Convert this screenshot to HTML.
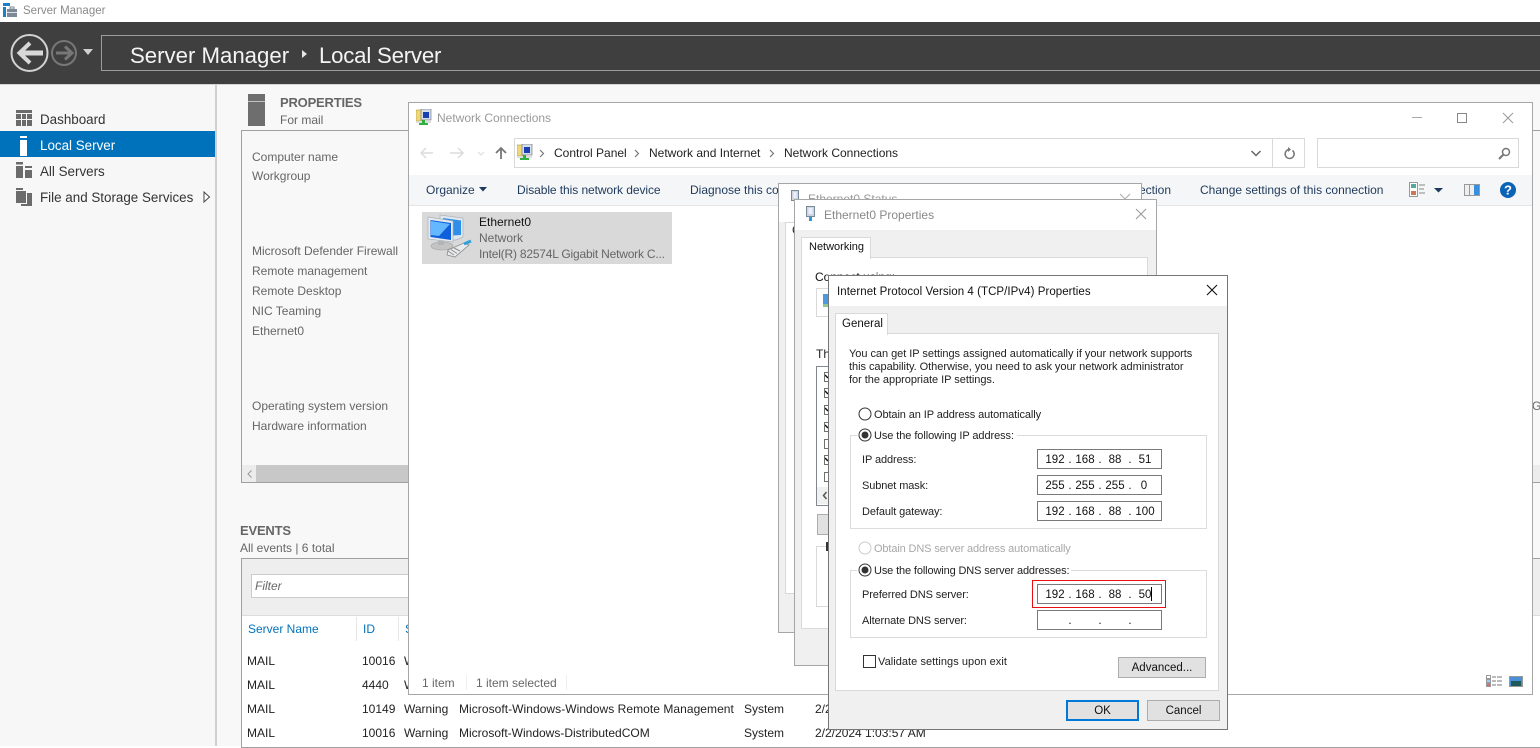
<!DOCTYPE html>
<html><head><meta charset="utf-8"><style>
html,body{margin:0;padding:0}
body{position:relative;width:1540px;height:746px;overflow:hidden;background:#fff;font-family:"Liberation Sans",sans-serif;font-size:12px;color:#000}
div,svg{position:absolute;box-sizing:border-box}
.t{white-space:nowrap;line-height:14px;height:14px}
.g{color:#666}
.k{color:#222}
.n{color:#1e395b}
.s{font-size:13.4px;line-height:16px;height:16px;color:#333;white-space:nowrap}
.b{font-weight:bold;font-size:13px;line-height:16px;height:16px;color:#666;white-space:nowrap;letter-spacing:-.2px}
.h{white-space:nowrap;height:28px;line-height:28px;font-size:22.2px;color:#f4f4f4}
.l{font-size:11px;letter-spacing:-.1px}
.win{background:#fff;border:1px solid #a6a6a6}
.inp{background:#fff;border:1px solid #7a7a7a;width:125px;height:20px}
.ip{white-space:nowrap;line-height:14px;height:14px;text-align:center;width:26px;font-size:11.5px;color:#111}
.btn{background:#e1e1e1;border:1px solid #adadad;text-align:center;line-height:20px;color:#111;font-size:11.5px}
.grp{border:1px solid #dcdcdc}
.cb{width:7px;height:10px;background:#fff;border:1px solid #707070;border-right:0}
</style></head><body>

<!-- title bar -->
<svg style="left:2px;top:2px" width="16" height="16" viewBox="0 0 16 16"><rect x="1" y="1" width="7" height="3" fill="#1a80c8"/><rect x="1" y="5" width="3" height="10" fill="#1a80c8"/><rect x="5" y="7" width="10" height="8" fill="#7c8a96"/><rect x="5" y="10" width="10" height="1" fill="#dde"/><rect x="8" y="5" width="4" height="2" fill="none" stroke="#7c8a96"/></svg>
<div class="t" style="left:23px;top:4px;color:#8a8a8a;font-size:11.5px">Server Manager</div>

<!-- header -->
<div style="left:0;top:22px;width:1540px;height:62px;background:#3f3f3f"></div>
<div style="left:0;top:84px;width:1540px;height:1px;background:#d4d4d4"></div>
<svg style="left:8px;top:30px" width="90" height="46" viewBox="0 0 90 46">
<circle cx="21.5" cy="23" r="18" fill="none" stroke="#d2d2d2" stroke-width="2"/>
<path d="M12 23H35" stroke="#d8d8d8" stroke-width="5" fill="none"/>
<path d="M22 13L11.500 23L22 33" stroke="#d8d8d8" stroke-width="4" fill="none"/>
<circle cx="56" cy="23" r="12" fill="none" stroke="#777" stroke-width="2"/>
<path d="M48 23H63M57 16.500L64 23L57 29.500" stroke="#777" stroke-width="3" fill="none"/>
<path d="M75 19H85L80 25Z" fill="#d0d0d0"/>
</svg>
<div style="left:101px;top:35px;width:1445px;height:36px;border:1px solid #9c9c9c"></div>
<div class="h" style="left:130px;top:42px">Server Manager</div>
<svg style="left:301px;top:49px" width="7" height="10"><path d="M1 1L6 5L1 9Z" fill="#e6e6e6"/></svg>
<div class="h" style="left:319px;top:42px;letter-spacing:-.2px">Local Server</div>

<!-- sidebar and main bg -->
<div style="left:0;top:85px;width:215px;height:661px;background:#f7f7f7"></div>
<div style="left:215px;top:85px;width:2px;height:661px;background:#cfcfcf"></div>
<div style="left:217px;top:85px;width:1323px;height:661px;background:#f8f8f8"></div>
<div style="left:0;top:131px;width:215px;height:26px;background:#0072bc"></div>
<svg style="left:16px;top:110px" width="16" height="100" viewBox="0 0 16 100">
<path d="M0 0H16V3H0ZM0 4H5V9H0ZM6 4H10V9H6ZM11 4H16V9H11ZM0 10H5V16H0ZM6 10H10V16H6ZM11 10H16V16H11Z" fill="#6b6b6b"/>
<path d="M4 26H11V28H4ZM4 30H11V46H4Z" fill="#fff"/>
<path d="M0 52H7V54.500H0ZM0 56H7V68H0ZM9 56H16V58H9ZM9 60H16V68H9Z" fill="#6b6b6b"/>
<path d="M0 78H7V80H0ZM0 81H10V93H0ZM11 83H16V96H5V94H11Z" fill="#6b6b6b"/>
</svg>
<div class="s" style="left:40px;top:112px">Dashboard</div>
<div class="s" style="left:40px;top:138px;color:#fff">Local Server</div>
<div class="s" style="left:40px;top:164px">All Servers</div>
<div class="s" style="left:40px;top:190px">File and Storage Services</div>
<svg style="left:203px;top:191px" width="8" height="12"><path d="M1 1L6.500 6L1 11Z" fill="#fff" stroke="#444"/></svg>

<!-- properties -->
<svg style="left:248px;top:94px" width="17" height="32"><rect width="17" height="32" fill="#6e6e6e"/><rect y="7" width="17" height="1" fill="#c0c0c0"/></svg>
<div class="b" style="left:280px;top:95px">PROPERTIES</div>
<div class="t g" style="left:280px;top:113px">For mail</div>
<div style="left:241px;top:130px;width:1300px;height:353px;border:1px solid #a0a0a0;background:#f8f8f8"></div>
<div style="left:242px;top:465px;width:1298px;height:17px;background:#ececec"></div>
<div style="left:256px;top:465px;width:160px;height:17px;background:#c8c8c8"></div>
<svg style="left:247px;top:470px" width="6" height="8"><path d="M4.500 0.500L1 4L4.500 7.500" fill="none" stroke="#999"/></svg>
<div class="t g" style="left:252px;top:150px">Computer name</div>
<div class="t g" style="left:252px;top:169px">Workgroup</div>
<div class="t g" style="left:252px;top:244px">Microsoft Defender Firewall</div>
<div class="t g" style="left:252px;top:264px">Remote management</div>
<div class="t g" style="left:252px;top:284px">Remote Desktop</div>
<div class="t g" style="left:252px;top:304px">NIC Teaming</div>
<div class="t g" style="left:252px;top:324px">Ethernet0</div>
<div class="t g" style="left:252px;top:399px">Operating system version</div>
<div class="t g" style="left:252px;top:419px">Hardware information</div>
<div class="t g" style="left:1532px;top:399px">G</div>

<!-- events -->
<div class="b" style="left:240px;top:523px">EVENTS</div>
<div class="t g" style="left:240px;top:541px">All events | 6 total</div>
<div style="left:241px;top:558px;width:1300px;height:190px;border:1px solid #a0a0a0;background:#fff"></div>
<div style="left:242px;top:559px;width:1298px;height:57px;background:#eeeeee;border-bottom:1px solid #dcdcdc"></div>
<div style="left:251px;top:574px;width:165px;height:24px;background:#fff;border:1px solid #ccc"></div>
<div class="t g" style="left:255px;top:579px;font-style:italic">Filter</div>
<div class="t" style="left:248px;top:622px;color:#0072bc">Server Name</div>
<div class="t" style="left:363px;top:622px;color:#0072bc">ID</div>
<div class="t" style="left:405px;top:622px;color:#0072bc">S</div>
<div style="left:356px;top:617px;width:1px;height:24px;background:#e6e6e6"></div>
<div style="left:398px;top:617px;width:1px;height:24px;background:#e6e6e6"></div>
<div class="t k" style="left:247px;top:654px">MAIL</div><div class="t k" style="left:362px;top:654px">10016</div><div class="t k" style="left:404px;top:654px">W</div>
<div class="t k" style="left:247px;top:678px">MAIL</div><div class="t k" style="left:362px;top:678px">4440</div><div class="t k" style="left:404px;top:678px">W</div>
<div class="t k" style="left:247px;top:702px">MAIL</div><div class="t k" style="left:362px;top:702px">10149</div><div class="t k" style="left:404px;top:702px">Warning</div><div class="t k" style="left:459px;top:702px;letter-spacing:.05px">Microsoft-Windows-Windows Remote Management</div><div class="t k" style="left:744px;top:702px">System</div><div class="t k" style="left:815px;top:702px">2/2/2024 1:03:57 AM</div>
<div class="t k" style="left:247px;top:726px">MAIL</div><div class="t k" style="left:362px;top:726px">10016</div><div class="t k" style="left:404px;top:726px">Warning</div><div class="t k" style="left:459px;top:726px">Microsoft-Windows-DistributedCOM</div><div class="t k" style="left:744px;top:726px">System</div><div class="t k" style="left:815px;top:726px">2/2/2024 1:03:57 AM</div>

<!-- Network Connections -->
<div class="win" style="left:408px;top:102px;width:1125px;height:593px"></div>
<svg style="left:416px;top:109px" width="16" height="17" viewBox="0 0 16 17"><rect x="0" y="1" width="8" height="11" fill="#f0d878" stroke="#b09a40" stroke-width=".6"/><rect x="5" y="0" width="10" height="11" fill="#d6dfe8" stroke="#667" stroke-width=".6"/><rect x="7" y="3" width="6" height="6" fill="#1a3fb0"/><rect x="0" y="12" width="15" height="2" fill="#ddd"/><rect x="6" y="11" width="3" height="3" fill="#30b040"/><rect x="3" y="14" width="9" height="2" fill="#30b040"/></svg>
<div class="t" style="left:437px;top:111px;color:#999">Network Connections</div>
<svg style="left:1405px;top:110px" width="115" height="14"><path d="M7 7.500H17" stroke="#aaa"/><rect x="52.500" y="3.500" width="9" height="9" fill="none" stroke="#888"/><path d="M98 3L108 13M108 3L98 13" stroke="#999" fill="none"/></svg>
<svg style="left:420px;top:145px" width="90" height="16"><path d="M1 8H13M6 3L1 8L6 13" fill="none" stroke="#dcdcdc" stroke-width="1.500"/><path d="M30 8H43M38 3L43 8L38 13" fill="none" stroke="#dcdcdc" stroke-width="1.500"/><path d="M58 7L61 10L64 7" fill="none" stroke="#ddd"/><path d="M81 14V3M76 8L81 3L86 8" fill="none" stroke="#777" stroke-width="1.800"/></svg>
<div style="left:514px;top:138px;width:759px;height:30px;border:1px solid #d9d9d9;background:#fff"></div>
<div style="left:1272px;top:138px;width:33px;height:30px;border:1px solid #d9d9d9;background:#fff"></div>
<svg style="left:517px;top:144px" width="16" height="17" viewBox="0 0 16 17"><rect x="0" y="1" width="8" height="11" fill="#f0d878" stroke="#b09a40" stroke-width=".6"/><rect x="5" y="0" width="10" height="11" fill="#d6dfe8" stroke="#667" stroke-width=".6"/><rect x="7" y="3" width="6" height="6" fill="#1a3fb0"/><rect x="0" y="12" width="15" height="2" fill="#ddd"/><rect x="6" y="11" width="3" height="3" fill="#30b040"/><rect x="3" y="14" width="9" height="2" fill="#30b040"/></svg>
<svg style="left:538px;top:149px" width="8" height="9"><path d="M2 1L5.500 4.500L2 8" fill="none" stroke="#777" stroke-width="1.200"/></svg>
<div class="t k" style="left:554px;top:146px">Control Panel</div>
<svg style="left:633px;top:149px" width="8" height="9"><path d="M2 1L5.500 4.500L2 8" fill="none" stroke="#777" stroke-width="1.200"/></svg>
<div class="t k" style="left:649px;top:146px">Network and Internet</div>
<svg style="left:768px;top:149px" width="8" height="9"><path d="M2 1L5.500 4.500L2 8" fill="none" stroke="#777" stroke-width="1.200"/></svg>
<div class="t k" style="left:784px;top:146px">Network Connections</div>
<svg style="left:1250px;top:149px" width="12" height="9"><path d="M1.500 2L6 6.500L10.500 2" fill="none" stroke="#666" stroke-width="1.500"/></svg>
<svg style="left:1282px;top:146px" width="14" height="15"><path d="M10.500 4.500A4.500 4.500 0 1 1 7 3.500" fill="none" stroke="#777" stroke-width="1.500"/><path d="M6 1V6L9 3.500Z" fill="#777"/></svg>
<div style="left:1317px;top:138px;width:202px;height:30px;border:1px solid #d9d9d9;background:#fff"></div>
<svg style="left:1498px;top:147px" width="13" height="13"><circle cx="8" cy="5" r="3.500" fill="none" stroke="#777" stroke-width="1.500"/><path d="M5.500 7.500L1 12" stroke="#777" stroke-width="2"/></svg>
<div style="left:409px;top:175px;width:1123px;height:31px;background:#f5f6f7;border-bottom:1px solid #e5e5e5"></div>
<div class="t n" style="left:426px;top:183px">Organize</div>
<svg style="left:479px;top:187px" width="9" height="6"><path d="M0 0H8L4 4.500Z" fill="#1e395b"/></svg>
<div class="t n" style="left:517px;top:183px;letter-spacing:-.07px">Disable this network device</div>
<div class="t n" style="left:690px;top:183px">Diagnose this connection</div>
<div class="t n" style="left:1139px;top:183px">ection</div>
<div class="t n" style="left:1200px;top:183px">Change settings of this connection</div>
<svg style="left:1409px;top:182px" width="110" height="17" viewBox="0 0 110 17">
<rect x=".5" y=".5" width="8" height="14" fill="#fff" stroke="#999"/><rect x="2" y="2" width="5" height="4" fill="#5a9"/><rect x="2" y="9" width="5" height="4" fill="#c75"/><path d="M10 3H16M10 7H15M10 11H16" stroke="#888"/>
<path d="M25 6H34L29.500 10.500Z" fill="#1e395b"/>
<rect x="55.500" y="2.500" width="15" height="11" fill="#eee" stroke="#999"/><rect x="65" y="3" width="5" height="10" fill="#3a8fdc"/><path d="M60.500 3V13" stroke="#999"/>
<circle cx="99" cy="8" r="8" fill="#0b63b5"/>
<text x="99" y="12.500" text-anchor="middle" font-family="Liberation Sans" font-weight="bold" font-size="13" fill="#fff">?</text></svg>
<div style="left:422px;top:212px;width:250px;height:52px;background:#d9d9d9"></div>
<svg style="left:426px;top:214px" width="48" height="48" viewBox="0 0 48 48">
<path d="M14 1L37 4V23L30 26H14Z" fill="#dfe6ec" stroke="#aab4bc" stroke-width=".7"/>
<path d="M17 4L35 6.500V21L17 22Z" fill="#2f8fe8"/>
<path d="M2 3L27 7V28L2 25Z" fill="#e6ebef" stroke="#a8b2ba" stroke-width=".7"/>
<path d="M4.500 6L25 9V26L4.500 23Z" fill="#0f5fdc"/>
<path d="M5 7L24 10L13 22L5 21Z" fill="#63b8ff"/>
<ellipse cx="16" cy="32" rx="11" ry="4" fill="#c4c4c4" stroke="#a5a5a5" stroke-width=".6"/>
<rect x="12" y="27" width="6" height="4" fill="#b4b4b4"/>
<path d="M22 36L38 29L43 31L29 43L21 41Z" fill="#e9ebed" stroke="#8a8a8a" stroke-width=".8"/>
<path d="M22 37L28 41M25 35.500L31 39.500M28 34L34 37" stroke="#8f8f8f" fill="none"/>
<path d="M38 30L45 27" stroke="#30a0d8" stroke-width="3"/></svg>
<div class="t" style="left:479px;top:215px;color:#111">Ethernet0</div>
<div class="t g" style="left:479px;top:231px">Network</div>
<div class="t g" style="left:479px;top:247px;letter-spacing:-.2px">Intel(R) 82574L Gigabit Network C...</div>
<div class="t g" style="left:422px;top:676px">1 item</div>
<div style="left:466px;top:675px;width:1px;height:15px;background:#eee"></div>
<div class="t g" style="left:476px;top:676px">1 item selected</div>
<div style="left:566px;top:675px;width:1px;height:15px;background:#eee"></div>
<svg style="left:1486px;top:675px" width="38" height="13"><rect x=".5" y=".5" width="4" height="3" fill="#fff" stroke="#999"/><rect x=".5" y="4.500" width="4" height="3" fill="#9cf" stroke="#999"/><rect x=".5" y="8.500" width="4" height="3" fill="#d66" stroke="#999"/><path d="M6 2H10M11 2H16M6 6H10M11 6H16M6 10H10M11 10H16" stroke="#777"/><rect x="23.500" y="1.500" width="13" height="10" fill="#4a90d8" stroke="#999"/><rect x="25" y="6" width="10" height="5" fill="#1f5a5a"/></svg>

<!-- Ethernet0 Status -->
<div class="win" style="left:778px;top:183px;width:364px;height:450px;background:#f0f0f0"></div>
<div style="left:779px;top:184px;width:362px;height:38px;background:#fff"></div>
<svg style="left:791px;top:190px" width="9" height="14"><rect x=".5" y=".5" width="7" height="10" fill="#cdd5dd" stroke="#7a8a9a"/><rect x="2.500" y="2" width="3" height="6" fill="#eef"/></svg>
<div class="t" style="left:808px;top:192px;color:#999">Ethernet0 Status</div>
<svg style="left:1119px;top:193px" width="12" height="12"><path d="M1 1L11 11M11 1L1 11" stroke="#aaa" fill="none"/></svg>
<div style="left:785px;top:222px;width:20px;height:372px;background:#fff;border:1px solid #d9d9d9"></div>
<div class="t" style="left:792px;top:223px;color:#222">C</div>

<!-- Ethernet0 Properties -->
<div class="win" style="left:794px;top:199px;width:363px;height:467px;background:#f0f0f0"></div>
<div style="left:795px;top:200px;width:361px;height:30px;background:#fff"></div>
<svg style="left:806px;top:206px" width="10" height="16"><rect x=".5" y=".5" width="8" height="10" fill="#cdd5dd" stroke="#7a8a9a"/><rect x="2.500" y="2" width="4" height="6" fill="#eef"/><rect x="3" y="11" width="3" height="4" fill="#2a9adf"/></svg>
<div class="t" style="left:824px;top:208px;color:#888">Ethernet0 Properties</div>
<svg style="left:1135px;top:208px" width="12" height="12"><path d="M1 1L11 11M11 1L1 11" stroke="#999" fill="none"/></svg>
<div style="left:801px;top:257px;width:347px;height:372px;background:#fff;border:1px solid #d9d9d9"></div>
<div style="left:801px;top:237px;width:70px;height:22px;background:#fff;border:1px solid #d9d9d9;border-bottom:0"></div>
<div class="t" style="left:809px;top:240px;font-size:11px;color:#111">Networking</div>
<div class="t" style="left:815px;top:270px;color:#111">Connect using:</div>
<div style="left:816px;top:288px;width:20px;height:29px;border:1px solid #d9d9d9;background:#fff"></div>
<svg style="left:823px;top:294px" width="7" height="14"><rect width="7" height="10" fill="#4a9ade"/><rect y="10" width="7" height="3" fill="#8fc88f"/></svg>
<div class="t" style="left:816px;top:347px;color:#222">Th</div>
<div style="left:816px;top:366px;width:20px;height:140px;border:1px solid #828790;background:#fff"></div>
<div class="cb" style="left:824px;top:372px"></div>
<div class="cb" style="left:824px;top:388px"></div>
<div class="cb" style="left:824px;top:405px"></div>
<div class="cb" style="left:824px;top:422px"></div>
<div class="cb" style="left:824px;top:439px"></div>
<div class="cb" style="left:824px;top:455px"></div>
<div class="cb" style="left:824px;top:472px"></div>
<svg style="left:825px;top:372px" width="4" height="100"><path d="M0 3L3 6M0 19L3 22M0 36L3 39M0 53L3 56M0 86L3 89" stroke="#111" stroke-width="1.500"/></svg>
<div style="left:817px;top:487px;width:12px;height:17px;background:#f0f0f0"></div>
<svg style="left:822px;top:491px" width="6" height="9"><path d="M4.500 1L1.500 4.500L4.500 8" fill="none" stroke="#555" stroke-width="1.500"/></svg>
<div style="left:817px;top:514px;width:12px;height:21px;background:#e1e1e1;border:1px solid #adadad"></div>
<div style="left:816px;top:546px;width:13px;height:61px;border:1px solid #d9d9d9;border-right:0"></div>
<div style="left:826px;top:542px;width:2px;height:9px;background:#333"></div>

<!-- IPv4 dialog -->
<div style="left:828px;top:275px;width:400px;height:455px;background:#f0f0f0;border:1px solid #767676"></div>
<div style="left:829px;top:276px;width:398px;height:30px;background:#fff"></div>
<div class="t" style="left:837px;top:285px;color:#111;font-size:11.5px;letter-spacing:.05px">Internet Protocol Version 4 (TCP/IPv4) Properties</div>
<svg style="left:1206px;top:284px" width="12" height="12"><path d="M1 1L11 11M11 1L1 11" stroke="#111" fill="none" stroke-width="1.100"/></svg>
<div style="left:835px;top:333px;width:384px;height:358px;background:#fff;border:1px solid #d9d9d9"></div>
<div style="left:835px;top:313px;width:53px;height:22px;background:#fff;border:1px solid #d9d9d9;border-bottom:0"></div>
<div class="t" style="left:842px;top:317px;font-size:11.500px;color:#111">General</div>
<div class="t k" style="left:849px;top:347px;font-size:11px;letter-spacing:-.04px">You can get IP settings assigned automatically if your network supports</div>
<div class="t k" style="left:849px;top:360px;font-size:11px;letter-spacing:-.04px">this capability. Otherwise, you need to ask your network administrator</div>
<div class="t k" style="left:849px;top:373px;font-size:11px;letter-spacing:-.04px">for the appropriate IP settings.</div>

<div class="grp" style="left:850px;top:435px;width:357px;height:94px"></div>
<div class="grp" style="left:850px;top:570px;width:357px;height:68px"></div>
<div style="left:857px;top:428px;width:160px;height:14px;background:#fff"></div>
<div style="left:857px;top:563px;width:214px;height:14px;background:#fff"></div>

<svg style="left:858px;top:407px" width="14" height="170" viewBox="0 0 14 170">
<circle cx="7" cy="7" r="6" fill="#fff" stroke="#333"/>
<circle cx="7" cy="28" r="6" fill="#fff" stroke="#333"/><circle cx="7" cy="28" r="3.500" fill="#333"/>
<circle cx="7" cy="141" r="6" fill="#fff" stroke="#ccc"/>
<circle cx="7" cy="163" r="6" fill="#fff" stroke="#333"/><circle cx="7" cy="163" r="3.500" fill="#333"/>
</svg>
<div class="t k l" style="left:874px;top:408px">Obtain an IP address automatically</div>
<div class="t k l" style="left:874px;top:429px;letter-spacing:-.08px">Use the following IP address:</div>
<div class="t k l" style="left:862px;top:453px">IP address:</div>
<div class="t k l" style="left:862px;top:479px">Subnet mask:</div>
<div class="t k l" style="left:862px;top:505px">Default gateway:</div>
<div class="t l" style="left:874px;top:542px;color:#a8a8a8;letter-spacing:-.13px">Obtain DNS server address automatically</div>
<div class="t k l" style="left:874px;top:564px;letter-spacing:-.13px">Use the following DNS server addresses:</div>
<div class="t k l" style="left:862px;top:588px">Preferred DNS server:</div>
<div class="t k l" style="left:862px;top:614px">Alternate DNS server:</div>

<div class="inp" style="left:1037px;top:449px"></div>
<div class="inp" style="left:1037px;top:475px"></div>
<div class="inp" style="left:1037px;top:501px"></div>
<div style="left:1032px;top:580px;width:134px;height:28px;border:1px solid #e81010"></div>
<div class="inp" style="left:1037px;top:584px"></div>
<div class="inp" style="left:1037px;top:610px"></div>

<div class="ip" style="left:1042px;top:453px">192</div><div class="ip" style="left:1057px;top:453px">.</div><div class="ip" style="left:1072px;top:453px">168</div><div class="ip" style="left:1087px;top:453px">.</div><div class="ip" style="left:1102px;top:453px">88</div><div class="ip" style="left:1117px;top:453px">.</div><div class="ip" style="left:1132px;top:453px">51</div>

<div class="ip" style="left:1042px;top:479px">255</div><div class="ip" style="left:1057px;top:479px">.</div><div class="ip" style="left:1072px;top:479px">255</div><div class="ip" style="left:1087px;top:479px">.</div><div class="ip" style="left:1102px;top:479px">255</div><div class="ip" style="left:1117px;top:479px">.</div><div class="ip" style="left:1131px;top:479px">0</div>

<div class="ip" style="left:1042px;top:505px">192</div><div class="ip" style="left:1057px;top:505px">.</div><div class="ip" style="left:1072px;top:505px">168</div><div class="ip" style="left:1087px;top:505px">.</div><div class="ip" style="left:1102px;top:505px">88</div><div class="ip" style="left:1117px;top:505px">.</div><div class="ip" style="left:1132px;top:505px">100</div>

<div class="ip" style="left:1042px;top:588px">192</div><div class="ip" style="left:1057px;top:588px">.</div><div class="ip" style="left:1072px;top:588px">168</div><div class="ip" style="left:1087px;top:588px">.</div><div class="ip" style="left:1102px;top:588px">88</div><div class="ip" style="left:1117px;top:588px">.</div><div class="ip" style="left:1132px;top:588px">50</div>
<div style="left:1151px;top:587px;width:1px;height:14px;background:#000"></div>

<div class="ip" style="left:1057px;top:614px">.</div><div class="ip" style="left:1087px;top:614px">.</div><div class="ip" style="left:1117px;top:614px">.</div>

<div style="left:863px;top:655px;width:13px;height:13px;background:#fff;border:1px solid #333"></div>
<div class="t k l" style="left:878px;top:655px;letter-spacing:.05px">Validate settings upon exit</div>
<div class="btn" style="left:1118px;top:657px;width:88px;height:21px">Advanced...</div>
<div class="btn" style="left:1066px;top:700px;width:73px;height:21px;border:2px solid #0078d7;line-height:18px">OK</div>
<div class="btn" style="left:1147px;top:700px;width:73px;height:21px">Cancel</div>
</body></html>
